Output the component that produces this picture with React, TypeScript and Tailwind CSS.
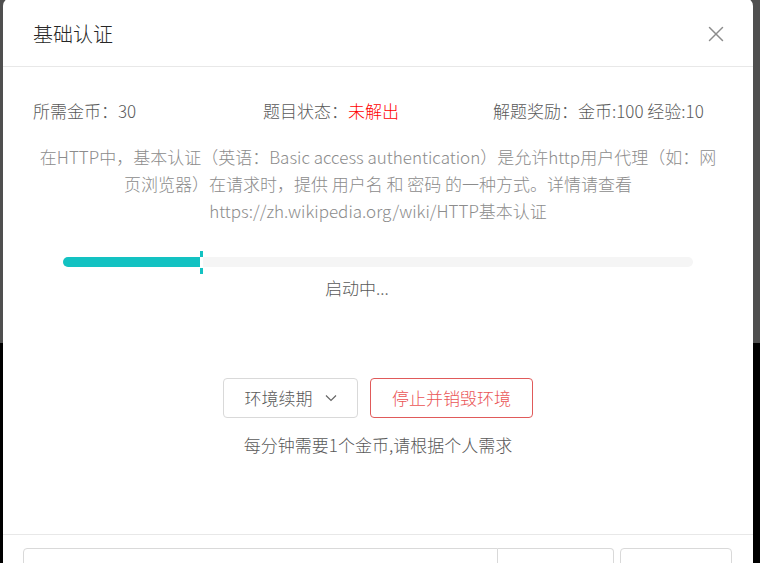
import React from 'react'

const font = "font-['Noto_Sans_CJK_SC','Noto_Sans',sans-serif] font-light"

function CloseIcon() {
    return (
        <svg width="16" height="16" viewBox="0 0 16 16" fill="none" stroke="#8c8c8c" strokeWidth="1.5" strokeLinecap="round">
            <line x1="1.5" y1="1.5" x2="14.5" y2="14.5" />
            <line x1="14.5" y1="1.5" x2="1.5" y2="14.5" />
        </svg>
    )
}

function ChevronDown() {
    return (
        <svg width="12" height="8" viewBox="0 0 12 8" fill="none" stroke="#666" strokeWidth="1.2">
            <polyline points="1,1.5 6,6.5 11,1.5" />
        </svg>
    )
}

export default function App() {
    const percent = 137 / 630

    return (
        <div className={`h-[563px] w-[760px] overflow-hidden bg-[linear-gradient(to_bottom,#4f4f4f_343px,#000_343px)] pl-[3px] ${font}`}>
            <div className="-mt-[2px] w-[750px] rounded-t-[8px] bg-white">
                {/* Header */}
                <div className="flex h-[69px] items-center justify-between border-b border-[#e8e8e8] pl-[30px] pr-[25px] pt-[3px]">
                    <h1 className="text-[20px] text-[#262626]">基础认证</h1>
                    <button className="p-1">
                        <CloseIcon />
                    </button>
                </div>

                {/* Body */}
                <div className="px-[30px] pt-[30px] pb-[76px]">
                    <div className="grid grid-cols-3 text-[17px] leading-[27px] text-[#595959]">
                        <div>所需金币：30</div>
                        <div>题目状态：<span className="text-[#f00]">未解出</span></div>
                        <div>解题奖励：金币:100 经验:10</div>
                    </div>

                    <p className="mt-[19px] text-center text-[17px] leading-[27px] text-[#8c8c8c]">
                        在HTTP中，基本认证（英语：Basic access authentication）是允许http用户代理（如：网页浏览器）在请求时，提供 用户名 和 密码 的一种方式。详情请查看https://zh.wikipedia.org/wiki/HTTP基本认证
                    </p>

                    {/* Progress */}
                    <div className="mx-[30px] mt-[33px]">
                        <div className="relative h-[10px] rounded-full bg-[#f5f5f5]">
                            <div className="h-full rounded-l-full bg-[#13c2c2]" style={{ width: `${percent * 100}%` }} />
                            <div className="absolute -top-[6px] flex h-[23px] w-[3px] flex-col" style={{ left: `${percent * 100}%` }}>
                                <div className="h-[6px] bg-[#13c2c2]" />
                                <div className="h-[11px] bg-white" />
                                <div className="h-[6px] bg-[#13c2c2]" />
                            </div>
                        </div>
                    </div>
                    <div className="mt-[7px] pr-[42px] text-center text-[17px] leading-[27px] text-[#595959]">启动中...</div>

                    {/* Actions */}
                    <div className="mt-[77px] flex justify-center gap-[12px]">
                        <button className="flex h-[40px] w-[135px] items-center justify-center gap-[12px] rounded-[4px] border border-[#d9d9d9] text-[17px] text-[#595959]">
                            环境续期
                            <ChevronDown />
                        </button>
                        <button className="h-[40px] w-[163px] rounded-[4px] border border-[#e05a5a] text-[17px] text-[#ea5455]">
                            停止并销毁环境
                        </button>
                    </div>
                    <div className="mt-[13px] text-center text-[17px] leading-[27px] text-[#595959]">每分钟需要1个金币,请根据个人需求</div>
                </div>

                {/* Footer */}
                <div className="flex border-t border-[#e8e8e8] pl-[20px] pt-[13px]">
                    <div className="flex h-[40px]">
                        <div className="w-[475px] rounded-l-[4px] border border-[#d9d9d9]" />
                        <div className="w-[116px] rounded-r-[4px] border border-l-0 border-[#d9d9d9]" />
                    </div>
                    <div className="ml-[6px] h-[40px] w-[112px] rounded-[4px] border border-[#d9d9d9]" />
                </div>
            </div>
        </div>
    )
}
